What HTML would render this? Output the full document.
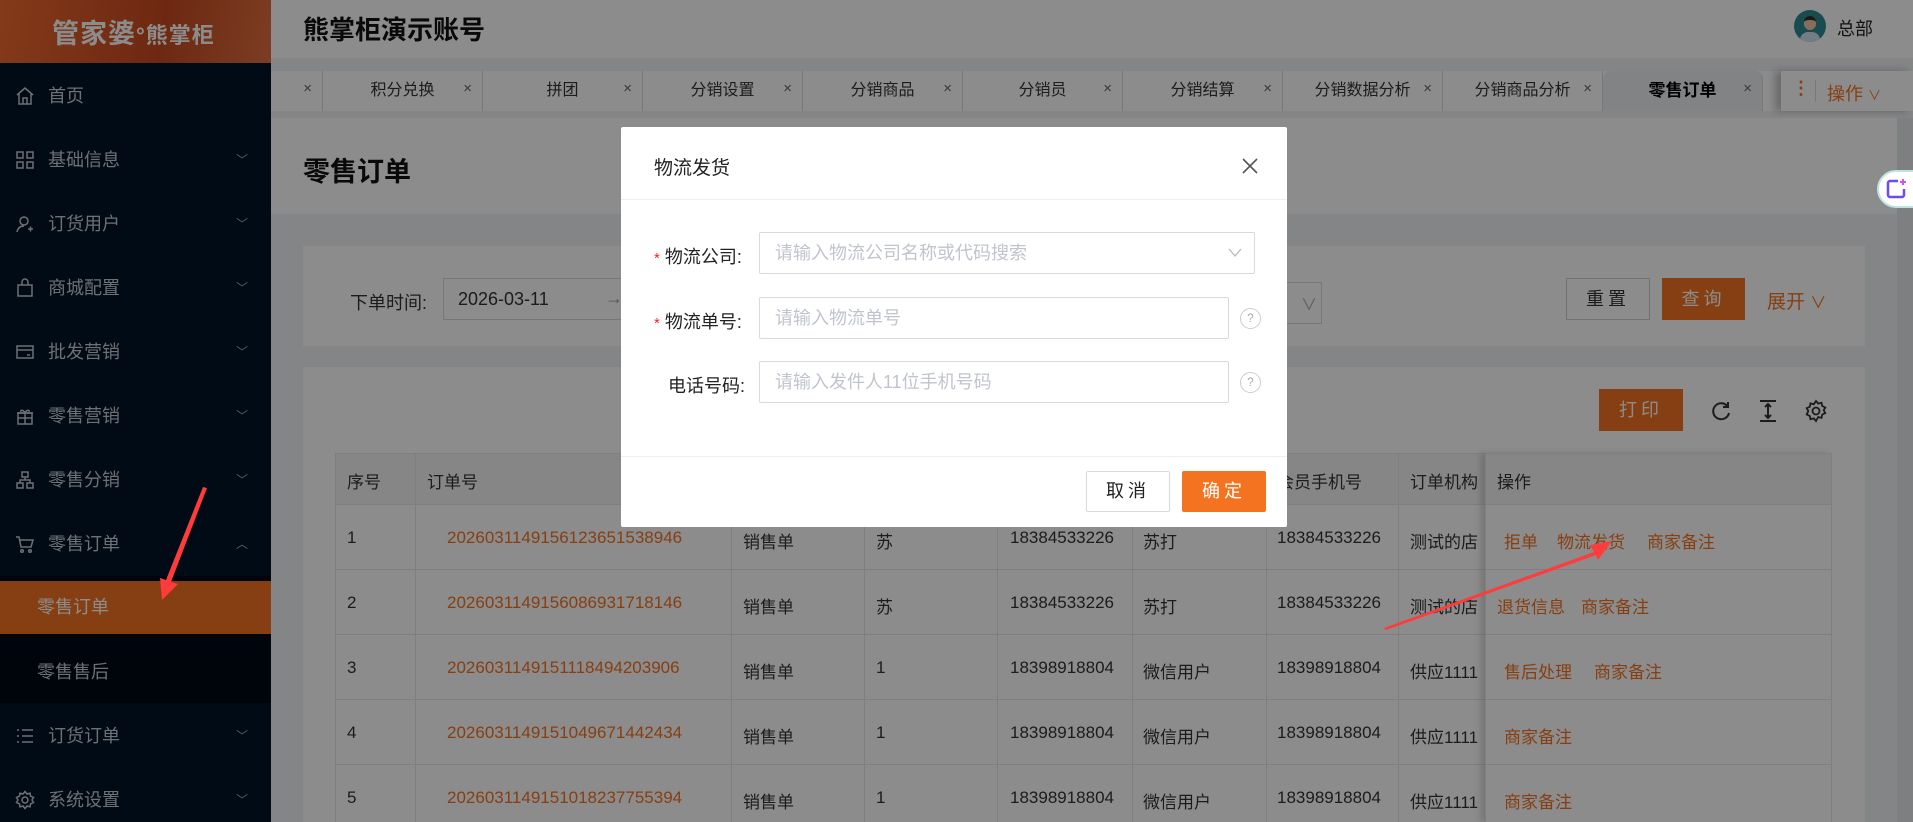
<!DOCTYPE html>
<html><head><meta charset="utf-8"><style>
*{margin:0;padding:0;box-sizing:border-box}
html,body{width:1913px;height:822px;overflow:hidden}
body{position:relative;font-family:"Liberation Sans","Noto Sans CJK SC",sans-serif;background:#f0f2f5;color:#333}
.a{position:absolute;white-space:nowrap}
#side{left:0;top:0;width:271px;height:822px;background:#001529;z-index:2}
#logo{left:0;top:0;width:271px;height:63px;background:linear-gradient(100deg,#f06a30,#c84a20 60%,#e07040)}
.mi{left:0;width:271px;height:64px;color:#c8ccd2;font-size:18px;line-height:64px}
.mi svg{position:absolute;left:15px;top:22px}
.mi .t{position:absolute;left:48px}
.mi .c{position:absolute;left:236px;top:0;font-size:12px;color:#aaa}
.tab{top:71px;height:40px;width:160px;line-height:40px;font-size:16px;text-align:center;color:#333;border-right:1px solid #ddd;background:#fff}
.tab i{position:absolute;right:10px;top:-2px;font-style:normal;color:#666;font-size:15px}
.th,.td{font-size:17px;color:#333}
.lk{color:#f47321;font-size:17px}
</style></head><body>
<div id="side" class="a">
 <div id="logo" class="a"><div class="a" style="left:52px;top:12px;font-size:27px;font-weight:bold;color:#fff;letter-spacing:1px">管家婆<span style="font-size:22px">°熊掌柜</span></div></div>
 <div class="a mi" style="top:64px"><svg width="20" height="20" viewBox="0 0 20 20" fill="none" stroke="#c8ccd2" stroke-width="1.5"><path d="M2 9L10 2l8 7M4 8v10h12V8M8 18v-6h4v6"/></svg><span class="t">首页</span></div>
 <div class="a mi" style="top:128px"><svg width="20" height="20" viewBox="0 0 20 20" fill="none" stroke="#c8ccd2" stroke-width="1.5"><rect x="2" y="2" width="6" height="6"/><rect x="12" y="2" width="6" height="6"/><rect x="2" y="12" width="6" height="6"/><rect x="12" y="12" width="6" height="6"/></svg><span class="t">基础信息</span><span class="c">﹀</span></div>
 <div class="a mi" style="top:192px"><svg width="20" height="20" viewBox="0 0 20 20" fill="none" stroke="#c8ccd2" stroke-width="1.5"><circle cx="9" cy="7" r="4"/><path d="M2 18c1-5 4-6 7-6M13 15h5M15.5 12.5v5"/></svg><span class="t">订货用户</span><span class="c">﹀</span></div>
 <div class="a mi" style="top:256px"><svg width="20" height="20" viewBox="0 0 20 20" fill="none" stroke="#c8ccd2" stroke-width="1.5"><path d="M3 7h14v11H3zM7 7V4a3 3 0 0 1 6 0v3"/></svg><span class="t">商城配置</span><span class="c">﹀</span></div>
 <div class="a mi" style="top:320px"><svg width="20" height="20" viewBox="0 0 20 20" fill="none" stroke="#c8ccd2" stroke-width="1.5"><rect x="2" y="4" width="16" height="12"/><path d="M2 8h16M12 13h3"/></svg><span class="t">批发营销</span><span class="c">﹀</span></div>
 <div class="a mi" style="top:384px"><svg width="20" height="20" viewBox="0 0 20 20" fill="none" stroke="#c8ccd2" stroke-width="1.5"><rect x="3" y="7" width="14" height="11"/><path d="M2 7h16M10 7v11M3 12h14M10 7C8 3 5 4 6 6M10 7c2-4 5-3 4-1"/></svg><span class="t">零售营销</span><span class="c">﹀</span></div>
 <div class="a mi" style="top:448px"><svg width="20" height="20" viewBox="0 0 20 20" fill="none" stroke="#c8ccd2" stroke-width="1.5"><rect x="7" y="2" width="6" height="5"/><rect x="2" y="13" width="6" height="5"/><rect x="12" y="13" width="6" height="5"/><path d="M10 7v3M5 13v-3h10v3"/></svg><span class="t">零售分销</span><span class="c">﹀</span></div>
 <div class="a mi" style="top:512px"><svg width="20" height="20" viewBox="0 0 20 20" fill="none" stroke="#c8ccd2" stroke-width="1.5"><path d="M1 3h3l2 10h10l2-7H5"/><circle cx="7" cy="17" r="1.3"/><circle cx="15" cy="17" r="1.3"/></svg><span class="t">零售订单</span><span class="c">︿</span></div>
 <div class="a" style="left:0;top:576px;width:271px;height:127px;background:#000a14"></div>
 <div class="a mi" style="top:581px;height:53px;line-height:53px;background:#f47321;color:#fff"><span class="t" style="left:37px">零售订单</span></div>
 <div class="a mi" style="top:640px"><span class="t" style="left:37px">零售售后</span></div>
 <div class="a mi" style="top:704px"><svg width="20" height="20" viewBox="0 0 20 20" fill="none" stroke="#c8ccd2" stroke-width="1.5"><path d="M2 4h2M2 10h2M2 16h2M7 4h11M7 10h11M7 16h11"/></svg><span class="t">订货订单</span><span class="c">﹀</span></div>
 <div class="a mi" style="top:768px"><svg width="20" height="20" viewBox="0 0 20 20" fill="none" stroke="#c8ccd2" stroke-width="1.5"><circle cx="10" cy="10" r="3"/><path d="M10 1.5l2 2.5 3-.8.6 3 2.9 1.3-1.5 2.5 1.5 2.5-2.9 1.3-.6 3-3-.8-2 2.5-2-2.5-3 .8-.6-3L1.5 12.5 3 10 1.5 7.5l2.9-1.3.6-3 3 .8z"/></svg><span class="t">系统设置</span><span class="c">﹀</span></div>
</div>

<!-- header -->
<div class="a" style="left:271px;top:0;width:1642px;height:58px;background:#fff"></div>
<div class="a" style="left:303px;top:10px;font-size:26px;font-weight:bold;color:#111">熊掌柜演示账号</div>
<div class="a" style="left:1794px;top:10px;width:32px;height:32px;border-radius:50%;background:#2f8a8f;overflow:hidden"><div class="a" style="left:10px;top:6px;width:12px;height:14px;border-radius:6px;background:#f2c8a8;border-top:4px solid #3a2a20"></div><div class="a" style="left:6px;top:22px;width:20px;height:12px;border-radius:8px 8px 0 0;background:#cfe6ee"></div></div>
<div class="a" style="left:1837px;top:15px;font-size:18px;color:#222">总部</div>

<!-- tabs -->
<div class="a" style="left:271px;top:58px;width:1642px;height:60px;background:#f0f2f5"></div>
<div class="a" style="left:271px;top:71px;width:1642px;height:40px;background:#fff"></div>
<div class="a tab" style="left:271px;width:52px">&nbsp;<i>×</i></div>
<div class="a tab" style="left:323px">积分兑换<i>×</i></div>
<div class="a tab" style="left:483px">拼团<i>×</i></div>
<div class="a tab" style="left:643px">分销设置<i>×</i></div>
<div class="a tab" style="left:803px">分销商品<i>×</i></div>
<div class="a tab" style="left:963px">分销员<i>×</i></div>
<div class="a tab" style="left:1123px">分销结算<i>×</i></div>
<div class="a tab" style="left:1283px">分销数据分析<i>×</i></div>
<div class="a tab" style="left:1443px">分销商品分析<i>×</i></div>
<div class="a tab" style="left:1603px;background:#eceef2;border-radius:8px 8px 0 0;font-weight:bold;color:#000;font-size:17px">零售订单<i style="font-weight:normal">×</i></div>
<div class="a" style="left:1781px;top:71px;width:132px;height:40px;background:#fff;box-shadow:-6px 0 8px rgba(0,0,0,.25)"></div>
<div class="a" style="left:1792px;top:78px;font-size:18px;color:#f47321;font-weight:bold">⋮</div>
<div class="a" style="left:1815px;top:80px;width:1px;height:22px;background:#ddd"></div>
<div class="a" style="left:1827px;top:80px;font-size:18px;color:#f47321">操作 <span style="font-size:13px">∨</span></div>

<!-- content -->
<div class="a" style="left:271px;top:118px;width:1626px;height:96px;background:#fff"></div>
<div class="a" style="left:303px;top:150px;font-size:27px;font-weight:bold;color:#111">零售订单</div>
<div class="a" style="left:1897px;top:118px;width:16px;height:704px;background:#e6e7ea"></div>
<div class="a" style="left:303px;top:246px;width:1562px;height:100px;background:#fff"></div>
<div class="a" style="left:350px;top:289px;font-size:18px;color:#333">下单时间:</div>
<div class="a" style="left:443px;top:278px;width:200px;height:42px;border:1px solid #d9d9d9"></div>
<div class="a" style="left:458px;top:289px;font-size:18px;color:#333">2026-03-11</div>
<div class="a" style="left:605px;top:288px;font-size:18px;color:#999">→</div>
<div class="a" style="left:1200px;top:282px;width:122px;height:42px;border:1px solid #d9d9d9"><span class="a" style="left:100px;top:8px;color:#aaa">∨</span></div>
<div class="a" style="left:1566px;top:278px;width:84px;height:42px;border:1px solid #d0d0d0;background:#fff;font-size:18px;line-height:40px;text-align:center;color:#333;letter-spacing:4px">重置</div>
<div class="a" style="left:1662px;top:278px;width:83px;height:42px;background:#f47321;font-size:18px;line-height:42px;text-align:center;color:#fff;letter-spacing:4px">查询</div>
<div class="a" style="left:1767px;top:287px;font-size:19px;color:#f47321">展开 <span style="font-size:16px">∨</span></div>

<div class="a" style="left:303px;top:367px;width:1562px;height:455px;background:#fff"></div>
<div class="a" style="left:1599px;top:389px;width:84px;height:42px;background:#f47321;font-size:18px;line-height:42px;text-align:center;color:#fff;letter-spacing:4px">打印</div>
<svg class="a" style="left:1709px;top:399px" width="24" height="24" viewBox="0 0 24 24" fill="none" stroke="#333" stroke-width="2"><path d="M19 8A8 8 0 1 0 20 14"/><path d="M19 3v5h-5"/></svg>
<svg class="a" style="left:1757px;top:399px" width="22" height="24" viewBox="0 0 22 24" fill="none" stroke="#333" stroke-width="2"><path d="M3 2h16M3 22h16M11 5v14M8 8l3-3 3 3M8 16l3 3 3-3"/></svg>
<svg class="a" style="left:1804px;top:399px" width="24" height="24" viewBox="0 0 24 24" fill="none" stroke="#333" stroke-width="1.8"><circle cx="12" cy="12" r="3.5"/><path d="M12 2l2.2 2.6 3.3-.9.7 3.3 3.1 1.5-1.6 2.8 1.6 2.8-3.1 1.5-.7 3.3-3.3-.9L12 22l-2.2-2.6-3.3.9-.7-3.3-3.1-1.5L4.3 12 2.7 9.2l3.1-1.5.7-3.3 3.3.9z"/></svg>

<!-- table -->
<div class="a" style="left:335px;top:453px;width:1497px;height:369px;border:1px solid #e8e8e8;border-bottom:none"></div>
<div class="a" style="left:335px;top:453px;width:1497px;height:52px;background:#f5f5f5;border:1px solid #e8e8e8"></div>
<div class="a" style="left:335px;top:569px;width:1497px;height:1px;background:#e8e8e8"></div>
<div class="a" style="left:335px;top:634px;width:1497px;height:1px;background:#e8e8e8"></div>
<div class="a" style="left:335px;top:699px;width:1497px;height:1px;background:#e8e8e8"></div>
<div class="a" style="left:335px;top:764px;width:1497px;height:1px;background:#e8e8e8"></div>
<div class="a" style="left:415px;top:453px;width:1px;height:369px;background:#e8e8e8"></div>
<div class="a" style="left:731px;top:453px;width:1px;height:369px;background:#e8e8e8"></div>
<div class="a" style="left:864px;top:453px;width:1px;height:369px;background:#e8e8e8"></div>
<div class="a" style="left:997px;top:453px;width:1px;height:369px;background:#e8e8e8"></div>
<div class="a" style="left:1132px;top:453px;width:1px;height:369px;background:#e8e8e8"></div>
<div class="a" style="left:1266px;top:453px;width:1px;height:369px;background:#e8e8e8"></div>
<div class="a" style="left:1398px;top:453px;width:1px;height:369px;background:#e8e8e8"></div>
<div class="a" style="left:1485px;top:453px;width:347px;height:369px;box-shadow:-5px 0 6px rgba(0,0,0,.15);border-left:1px solid #e8e8e8"></div>
<div class="a th" style="left:347px;top:468px">序号</div>
<div class="a th" style="left:427px;top:468px">订单号</div>
<div class="a th" style="left:743px;top:468px">类型</div>
<div class="a th" style="left:1277px;top:468px">会员手机号</div>
<div class="a th" style="left:1410px;top:468px;width:74px;overflow:hidden">订单机构</div>
<div class="a th" style="left:1497px;top:468px">操作</div>

<div class="a td" style="left:347px;top:528px">1</div>
<div class="a td" style="left:347px;top:593px">2</div>
<div class="a td" style="left:347px;top:658px">3</div>
<div class="a td" style="left:347px;top:723px">4</div>
<div class="a td" style="left:347px;top:788px">5</div>
<div class="a lk" style="left:447px;top:528px">2026031149156123651538946</div>
<div class="a lk" style="left:447px;top:593px">2026031149156086931718146</div>
<div class="a lk" style="left:447px;top:658px">2026031149151118494203906</div>
<div class="a lk" style="left:447px;top:723px">2026031149151049671442434</div>
<div class="a lk" style="left:447px;top:788px">2026031149151018237755394</div>

<div class="a td" style="left:743px;top:528px">销售单</div><div class="a td" style="left:876px;top:528px">苏</div><div class="a td" style="left:1010px;top:528px">18384533226</div><div class="a td" style="left:1143px;top:528px">苏打</div><div class="a td" style="left:1277px;top:528px">18384533226</div><div class="a td" style="left:1410px;top:528px;width:75px;overflow:hidden">测试的店</div>
<div class="a td" style="left:743px;top:593px">销售单</div><div class="a td" style="left:876px;top:593px">苏</div><div class="a td" style="left:1010px;top:593px">18384533226</div><div class="a td" style="left:1143px;top:593px">苏打</div><div class="a td" style="left:1277px;top:593px">18384533226</div><div class="a td" style="left:1410px;top:593px;width:75px;overflow:hidden">测试的店</div>
<div class="a td" style="left:743px;top:658px">销售单</div><div class="a td" style="left:876px;top:658px">1</div><div class="a td" style="left:1010px;top:658px">18398918804</div><div class="a td" style="left:1143px;top:658px">微信用户</div><div class="a td" style="left:1277px;top:658px">18398918804</div><div class="a td" style="left:1410px;top:658px;width:75px;overflow:hidden">供应1111</div>
<div class="a td" style="left:743px;top:723px">销售单</div><div class="a td" style="left:876px;top:723px">1</div><div class="a td" style="left:1010px;top:723px">18398918804</div><div class="a td" style="left:1143px;top:723px">微信用户</div><div class="a td" style="left:1277px;top:723px">18398918804</div><div class="a td" style="left:1410px;top:723px;width:75px;overflow:hidden">供应1111</div>
<div class="a td" style="left:743px;top:788px">销售单</div><div class="a td" style="left:876px;top:788px">1</div><div class="a td" style="left:1010px;top:788px">18398918804</div><div class="a td" style="left:1143px;top:788px">微信用户</div><div class="a td" style="left:1277px;top:788px">18398918804</div><div class="a td" style="left:1410px;top:788px;width:75px;overflow:hidden">供应1111</div>

<div class="a lk" style="left:1504px;top:528px">拒单</div><div class="a lk" style="left:1557px;top:528px">物流发货</div><div class="a lk" style="left:1647px;top:528px">商家备注</div>
<div class="a lk" style="left:1497px;top:593px">退货信息</div><div class="a lk" style="left:1581px;top:593px">商家备注</div>
<div class="a lk" style="left:1504px;top:658px">售后处理</div><div class="a lk" style="left:1594px;top:658px">商家备注</div>
<div class="a lk" style="left:1504px;top:723px">商家备注</div>
<div class="a lk" style="left:1504px;top:788px">商家备注</div>

<!-- overlay -->
<div class="a" style="left:0;top:0;width:1913px;height:822px;background:rgba(0,0,0,.45);z-index:3"></div>

<div style="position:absolute;left:0;top:0;width:1913px;height:822px;z-index:4">
<!-- AI button -->
<div class="a" style="left:1877px;top:170px;width:40px;height:38px;border-radius:19px 0 0 19px;background:#fff;border:2px solid #bfe3df"></div>
<svg class="a" style="left:1884px;top:177px" width="24" height="24" viewBox="0 0 24 24" fill="none" stroke="#6a4cf5" stroke-width="2.5"><path d="M14 4H6a2 2 0 0 0-2 2v12a2 2 0 0 0 2 2h12a2 2 0 0 0 2-2v-6"/><path d="M19 2v6M16 5h6" stroke="#d84ff0" stroke-width="2"/></svg>

<!-- arrows -->
<svg class="a" style="left:0;top:0" width="1913" height="822" viewBox="0 0 1913 822">
<path d="M207 488L171 582L178 584L162 600L160 578L166 580L203 487Z" fill="#ff3b3b"/>
<path d="M1384 628L1594 552L1590 545L1612 541L1598 560L1596 555L1386 630Z" fill="#ff3b3b"/>
</svg>

<!-- modal -->
<div class="a" style="left:621px;top:127px;width:666px;height:400px;background:#fff;border-radius:2px">
 <div class="a" style="left:33px;top:26px;font-size:19px;color:#222">物流发货</div>
 <svg class="a" style="left:620px;top:30px" width="18" height="18" viewBox="0 0 18 18" stroke="#555" stroke-width="1.6"><path d="M2 2L16 16M16 2L2 16"/></svg>
 <div class="a" style="left:0;top:72px;width:666px;height:1px;background:#eee"></div>
 <div class="a" style="left:33px;top:116px;font-size:18px;color:#222"><span style="color:#f5222d;font-size:15px">*</span> 物流公司:</div>
 <div class="a" style="left:138px;top:105px;width:496px;height:42px;border:1px solid #d9d9d9;border-radius:2px;font-size:18px;color:#c0c4cc;line-height:40px;padding-left:15px">请输入物流公司名称或代码搜索<svg class="a" style="left:468px;top:15px" width="14" height="10" viewBox="0 0 14 10" fill="none" stroke="#bbb" stroke-width="1.3"><path d="M1 1l6 7 6-7"/></svg></div>
 <div class="a" style="left:33px;top:181px;font-size:18px;color:#222"><span style="color:#f5222d;font-size:15px">*</span> 物流单号:</div>
 <div class="a" style="left:138px;top:170px;width:470px;height:42px;border:1px solid #d9d9d9;border-radius:2px;font-size:18px;color:#c0c4cc;line-height:40px;padding-left:15px">请输入物流单号</div>
 <div class="a" style="left:619px;top:181px;width:21px;height:21px;border:1px solid #ccc;border-radius:50%;font-size:12px;color:#aaa;text-align:center;line-height:19px">?</div>
 <div class="a" style="left:47px;top:245px;font-size:18px;color:#222">电话号码:</div>
 <div class="a" style="left:138px;top:234px;width:470px;height:42px;border:1px solid #d9d9d9;border-radius:2px;font-size:18px;color:#c0c4cc;line-height:40px;padding-left:15px">请输入发件人11位手机号码</div>
 <div class="a" style="left:619px;top:245px;width:21px;height:21px;border:1px solid #ccc;border-radius:50%;font-size:12px;color:#aaa;text-align:center;line-height:19px">?</div>
 <div class="a" style="left:0;top:329px;width:666px;height:1px;background:#eee"></div>
 <div class="a" style="left:465px;top:344px;width:84px;height:41px;border:1px solid #d9d9d9;border-radius:2px;font-size:18px;line-height:39px;text-align:center;color:#222;letter-spacing:4px">取消</div>
 <div class="a" style="left:561px;top:344px;width:84px;height:41px;background:#f47321;border-radius:2px;font-size:18px;line-height:41px;text-align:center;color:#fff;letter-spacing:4px">确定</div>
</div>
</div>
</body></html>
